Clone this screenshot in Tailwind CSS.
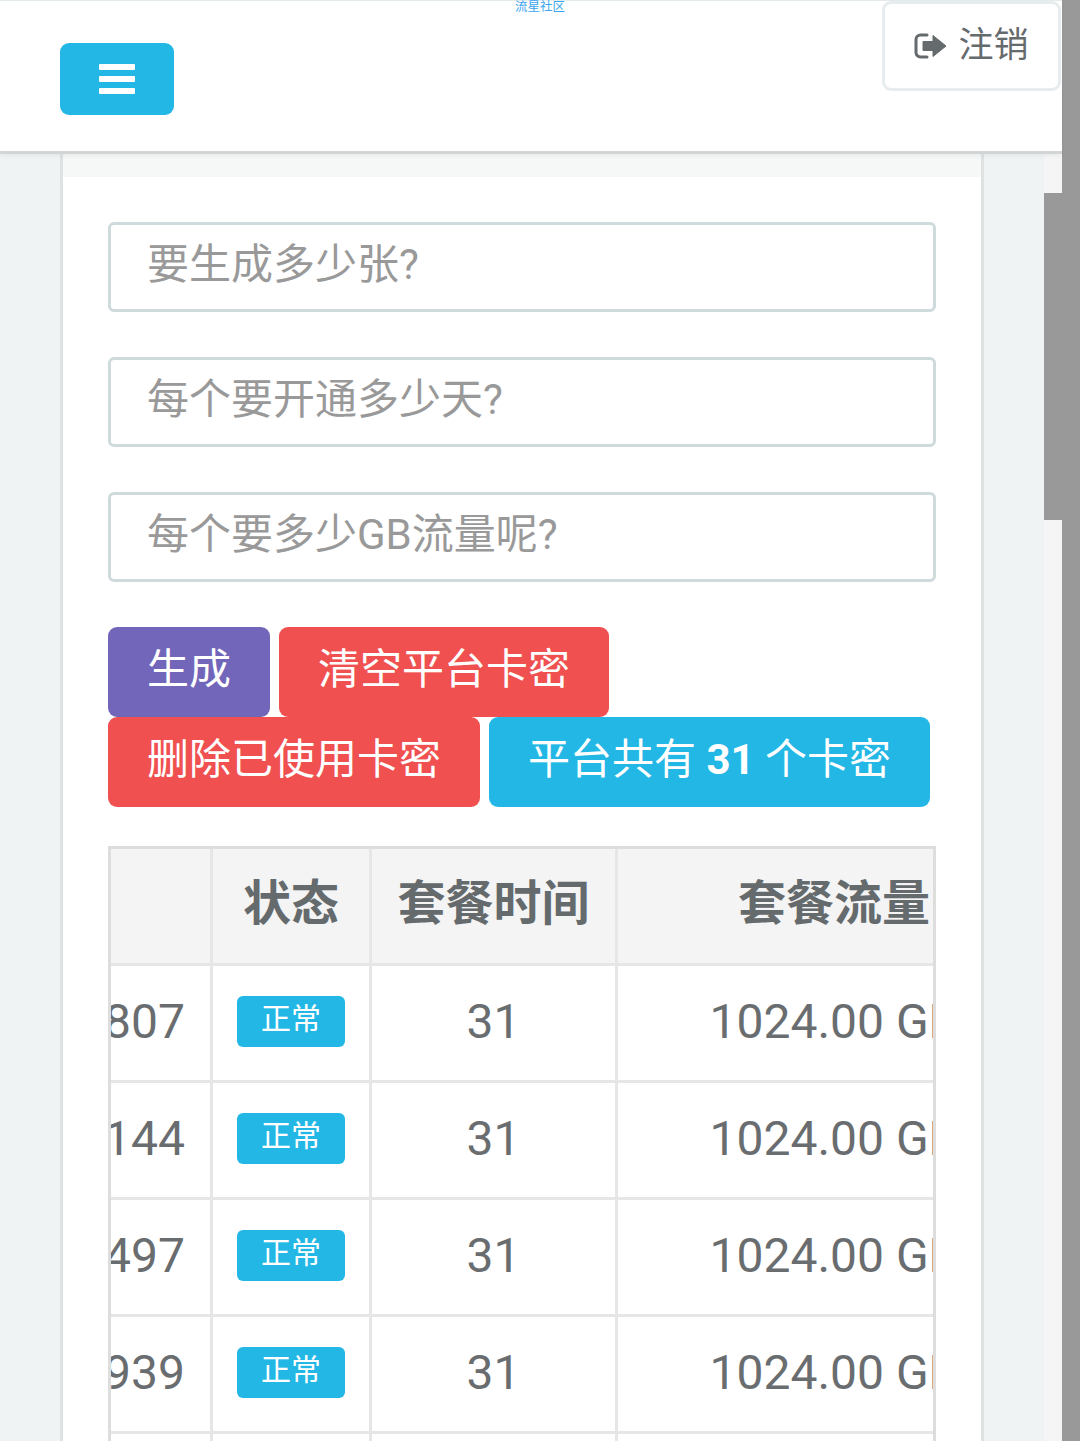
<!DOCTYPE html>
<html lang="en">
<head>
    <meta charset="UTF-8">
    <meta name="viewport" content="width=device-width, initial-scale=1.0">
    <title>卡密管理</title>
    <script src="https://cdn.jsdelivr.net/npm/@tailwindcss/browser@4"></script>
</head>
<body class="h-[1441px] overflow-hidden bg-[#999999] font-[Roboto,'Noto_Sans_CJK_SC',sans-serif] text-[#656a6d]">
    <div class="flex h-[1441px]">
        <div class="flex w-[1062px] flex-col">
            <!-- Top Navigation -->
            <header class="relative z-10 flex h-[154px] shrink-0 items-start border-t border-b-[3px] border-t-[#e4ecea] border-b-[#d2d5d6] bg-white shadow-[0_2px_4px_rgba(0,0,0,0.05)]">
                <button class="mt-[42px] ml-[60px] flex h-[72px] w-[114px] flex-col items-center justify-center gap-[6px] rounded-[9px] bg-[#23b7e5]">
                    <span class="h-[6px] w-[36px] rounded-[1px] bg-white"></span>
                    <span class="h-[6px] w-[36px] rounded-[1px] bg-white"></span>
                    <span class="h-[6px] w-[36px] rounded-[1px] bg-white"></span>
                </button>
                <a class="ml-[341px] text-[12.5px] leading-[12px] text-[#3aa5f0]">流星社区</a>
                <button class="mr-[1px] ml-auto flex h-[90px] w-[179px] items-center justify-center gap-[10px] rounded-[9px] border-[3px] border-[#e7ecee] bg-white text-[35px]">
                    <svg width="34" height="28" viewBox="0 0 34 28" class="shrink-0">
                        <path d="M13 3H6.500A4.500 4.500 0 0 0 2 7.500v13A4.500 4.500 0 0 0 6.500 25H13" fill="none" stroke="#656a6d" stroke-width="3" stroke-linecap="round"/>
                        <path d="M9 9.500h10V3.500L32 14 19 24.500V18.500H9z" fill="#656a6d" stroke="#656a6d" stroke-width="1" stroke-linejoin="round"/>
                    </svg>
                    <span class="pb-[2px] leading-none">注销</span>
                </button>
            </header>

            <div class="flex min-h-0 flex-1">
                <!-- Main Content -->
                <main class="w-[1044px] overflow-hidden bg-[#eff3f4] px-[60px]">
                    <div class="h-full border-x-[3px] border-[#dee2e3] bg-white">
                        <div class="h-[23px] bg-[#f6f8f8]"></div>
                        <div class="px-[45px] pt-[45px]">
                            <form class="flex flex-col gap-[45px]">
                                <input type="text" placeholder="要生成多少张?" class="h-[90px] w-full rounded-[6px] border-[3px] border-[#cfdadd] bg-white pb-[6px] pl-[36px] text-[42px] placeholder:text-[#999999]">
                                <input type="text" placeholder="每个要开通多少天?" class="h-[90px] w-full rounded-[6px] border-[3px] border-[#cfdadd] bg-white pb-[6px] pl-[36px] text-[42px] placeholder:text-[#999999]">
                                <input type="text" placeholder="每个要多少GB流量呢?" class="h-[90px] w-full rounded-[6px] border-[3px] border-[#cfdadd] bg-white pb-[6px] pl-[36px] text-[42px] placeholder:text-[#999999]">
                                <div class="flex flex-wrap gap-x-[9px]">
                                    <button type="button" class="h-[90px] rounded-[9px] bg-[#7266ba] px-[39px] pb-[6px] text-[42px] text-white">生成</button>
                                    <button type="button" class="h-[90px] rounded-[9px] bg-[#f05050] px-[39px] pb-[6px] text-[42px] text-white">清空平台卡密</button>
                                    <button type="button" class="h-[90px] rounded-[9px] bg-[#f05050] px-[39px] pb-[6px] text-[42px] text-white">删除已使用卡密</button>
                                    <button type="button" class="h-[90px] rounded-[9px] bg-[#23b7e5] px-[39px] pb-[6px] text-[42px] text-white">平台共有 <b>31</b> 个卡密</button>
                                </div>
                            </form>

                            <!-- Card Table -->
                            <div class="mt-[39px] h-[700px] overflow-hidden border-x-[3px] border-t-[3px] border-[#dddddd]">
                                <table class="ml-[-60px] w-[1002px] table-fixed border-separate border-spacing-0 text-[48px]">
                                    <colgroup>
                                        <col class="w-[162px]">
                                        <col class="w-[159px]">
                                        <col class="w-[246px]">
                                        <col class="w-[435px]">
                                    </colgroup>
                                    <thead>
                                        <tr class="bg-[#f4f4f4]">
                                            <th class="h-[117px] border-r-[3px] border-b-[3px] border-[#e6e6e6] pb-[4px]"></th>
                                            <th class="h-[117px] border-r-[3px] border-b-[3px] border-[#e6e6e6] pb-[4px]">状态</th>
                                            <th class="h-[117px] border-r-[3px] border-b-[3px] border-[#e6e6e6] pb-[4px]">套餐时间</th>
                                            <th class="h-[117px] border-r-[3px] border-b-[3px] border-[#e6e6e6] pb-[4px]">套餐流量</th>
                                        </tr>
                                    </thead>
                                    <tbody class="text-center text-[#696d70]">
                                        <tr>
                                            <td class="h-[117px] border-r-[3px] border-b-[3px] border-[#e6e6e6] pr-[25px] pb-[2px] text-right">807</td>
                                            <td class="h-[117px] border-r-[3px] border-b-[3px] border-[#e6e6e6]"><span class="mb-[10px] inline-block h-[51px] w-[108px] rounded-[6px] bg-[#23b7e5] align-middle text-[30px] leading-[46px] text-white">正常</span></td>
                                            <td class="h-[117px] border-r-[3px] border-b-[3px] border-[#e6e6e6] pb-[2px]">31</td>
                                            <td class="h-[117px] border-r-[3px] border-b-[3px] border-[#e6e6e6] pb-[2px]">1024.00 GB</td>
                                        </tr>
                                        <tr>
                                            <td class="h-[117px] border-r-[3px] border-b-[3px] border-[#e6e6e6] pr-[25px] pb-[2px] text-right">144</td>
                                            <td class="h-[117px] border-r-[3px] border-b-[3px] border-[#e6e6e6]"><span class="mb-[10px] inline-block h-[51px] w-[108px] rounded-[6px] bg-[#23b7e5] align-middle text-[30px] leading-[46px] text-white">正常</span></td>
                                            <td class="h-[117px] border-r-[3px] border-b-[3px] border-[#e6e6e6] pb-[2px]">31</td>
                                            <td class="h-[117px] border-r-[3px] border-b-[3px] border-[#e6e6e6] pb-[2px]">1024.00 GB</td>
                                        </tr>
                                        <tr>
                                            <td class="h-[117px] border-r-[3px] border-b-[3px] border-[#e6e6e6] pr-[25px] pb-[2px] text-right">497</td>
                                            <td class="h-[117px] border-r-[3px] border-b-[3px] border-[#e6e6e6]"><span class="mb-[10px] inline-block h-[51px] w-[108px] rounded-[6px] bg-[#23b7e5] align-middle text-[30px] leading-[46px] text-white">正常</span></td>
                                            <td class="h-[117px] border-r-[3px] border-b-[3px] border-[#e6e6e6] pb-[2px]">31</td>
                                            <td class="h-[117px] border-r-[3px] border-b-[3px] border-[#e6e6e6] pb-[2px]">1024.00 GB</td>
                                        </tr>
                                        <tr>
                                            <td class="h-[117px] border-r-[3px] border-b-[3px] border-[#e6e6e6] pr-[25px] pb-[2px] text-right">939</td>
                                            <td class="h-[117px] border-r-[3px] border-b-[3px] border-[#e6e6e6]"><span class="mb-[10px] inline-block h-[51px] w-[108px] rounded-[6px] bg-[#23b7e5] align-middle text-[30px] leading-[46px] text-white">正常</span></td>
                                            <td class="h-[117px] border-r-[3px] border-b-[3px] border-[#e6e6e6] pb-[2px]">31</td>
                                            <td class="h-[117px] border-r-[3px] border-b-[3px] border-[#e6e6e6] pb-[2px]">1024.00 GB</td>
                                        </tr>
                                        <tr>
                                            <td class="h-[117px] border-r-[3px] border-b-[3px] border-[#e6e6e6]"></td>
                                            <td class="h-[117px] border-r-[3px] border-b-[3px] border-[#e6e6e6]"></td>
                                            <td class="h-[117px] border-r-[3px] border-b-[3px] border-[#e6e6e6]"></td>
                                            <td class="h-[117px] border-r-[3px] border-b-[3px] border-[#e6e6e6]"></td>
                                        </tr>
                                    </tbody>
                                </table>
                            </div>
                        </div>
                    </div>
                </main>

                <!-- Inner scrollbar -->
                <div class="w-[18px] bg-[#f5f5f5]">
                    <div class="mt-[39px] h-[327px] bg-[#999999]"></div>
                </div>
            </div>
        </div>
    </div>
</body>
</html>
